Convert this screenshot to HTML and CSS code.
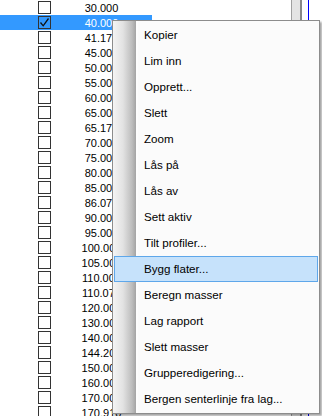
FILE: index.html
```html
<!DOCTYPE HTML>
<html lang="no">
<head>
  <meta charset="UTF-8">
  <title>Lagliste</title>
  <link rel="stylesheet" href="styles.css">
</head>
<body>
  <div class="screen">
    <div class="list">
      <div class="row"><span class="box"></span><span class="val">30.000</span></div>
      <div class="row selected"><span class="box"><svg width="11" height="11" viewBox="0 0 11 11"><path d="M1.5 5.5 L4.2 8.8 L9.5 1.5" fill="none" stroke="#111" stroke-width="1.3"/></svg></span><span class="val">40.000</span></div>
      <div class="row"><span class="box"></span><span class="val">41.170</span></div>
      <div class="row"><span class="box"></span><span class="val">45.000</span></div>
      <div class="row"><span class="box"></span><span class="val">50.000</span></div>
      <div class="row"><span class="box"></span><span class="val">55.000</span></div>
      <div class="row"><span class="box"></span><span class="val">60.000</span></div>
      <div class="row"><span class="box"></span><span class="val">65.000</span></div>
      <div class="row"><span class="box"></span><span class="val">65.170</span></div>
      <div class="row"><span class="box"></span><span class="val">70.000</span></div>
      <div class="row"><span class="box"></span><span class="val">75.000</span></div>
      <div class="row"><span class="box"></span><span class="val">80.000</span></div>
      <div class="row"><span class="box"></span><span class="val">85.000</span></div>
      <div class="row"><span class="box"></span><span class="val">86.070</span></div>
      <div class="row"><span class="box"></span><span class="val">90.000</span></div>
      <div class="row"><span class="box"></span><span class="val">95.000</span></div>
      <div class="row"><span class="box"></span><span class="val">100.000</span></div>
      <div class="row"><span class="box"></span><span class="val">105.000</span></div>
      <div class="row"><span class="box"></span><span class="val">110.000</span></div>
      <div class="row"><span class="box"></span><span class="val">110.070</span></div>
      <div class="row"><span class="box"></span><span class="val">120.000</span></div>
      <div class="row"><span class="box"></span><span class="val">130.000</span></div>
      <div class="row"><span class="box"></span><span class="val">140.000</span></div>
      <div class="row"><span class="box"></span><span class="val">144.200</span></div>
      <div class="row"><span class="box"></span><span class="val">150.000</span></div>
      <div class="row"><span class="box"></span><span class="val">160.000</span></div>
      <div class="row"><span class="box"></span><span class="val">170.000</span></div>
      <div class="row"><span class="box"></span><span class="val">170.910</span></div>
    </div>
    <div class="splitter"></div>
    <div class="gap"></div>
    <div class="plot"></div>
  </div>

  <ul class="menu">
    <li>Kopier</li>
    <li>Lim inn</li>
    <li>Opprett...</li>
    <li>Slett</li>
    <li>Zoom</li>
    <li>Lås på</li>
    <li>Lås av</li>
    <li>Sett aktiv</li>
    <li>Tilt profiler...</li>
    <li class="hover">Bygg flater...</li>
    <li>Beregn masser</li>
    <li>Lag rapport</li>
    <li>Slett masser</li>
    <li>Grupperedigering...</li>
    <li>Bergen senterlinje fra lag...</li>
  </ul>
</body>
</html>
```

FILE: styles.css
```css
body {
  margin: 0;
  width: 322px;
  height: 416px;
  overflow: hidden;
  background: white;
  font-family: "Liberation Sans", Arial, sans-serif;
}

.screen {
  display: flex;
  height: 416px;
}

.list {
  width: 291px;
  flex: none;
}

.row {
  display: flex;
  align-items: center;
  width: 152px;
  height: 15px;
  font-size: 11px;
  color: #000;
}

.row.selected {
  background-color: #3399ff;
  color: white;
}

.box {
  box-sizing: border-box;
  width: 13px;
  height: 13px;
  margin-left: 38px;
  border: 1px solid #333;
  display: flex;
  align-items: center;
  justify-content: center;
}

.val {
  width: 101px;
  text-align: center;
  white-space: nowrap;
}

.splitter {
  box-sizing: border-box;
  width: 11px;
  flex: none;
  border-left: 1px solid #a0a0a0;
  border-right: 2px solid #888;
  background-color: #e4e4e4;
}

.gap {
  width: 6px;
  flex: none;
}

.plot {
  flex: 1;
  border-left: 1px solid #0000ff;
}

.menu {
  position: absolute;
  left: 112px;
  top: 20px;
  width: 208px;
  height: 394px;
  box-sizing: border-box;
  margin: 0;
  padding: 1px;
  list-style: none;
  border: 1px solid #8c8c8c;
  background-color: #fbfbfb;
  background-image: linear-gradient(to right, #f4f4f4 0px, #e2e2e2 10px, #bdbdbd 19px, #a4a4a4 23px, #fdfdfd 23px);
  background-size: 25px 100%;
  background-repeat: no-repeat;
  box-shadow: 2px 2px 2px rgba(0, 0, 0, 0.35);
  font-size: 11.6px;
}

.menu li {
  box-sizing: border-box;
  height: 26px;
  line-height: 24px;
  padding-left: 29px;
  border: 1px solid transparent;
  color: #000;
  white-space: nowrap;
}

.menu li.hover {
  background-color: #c6e2fb;
  border-color: #5ea7ea;
}
```
